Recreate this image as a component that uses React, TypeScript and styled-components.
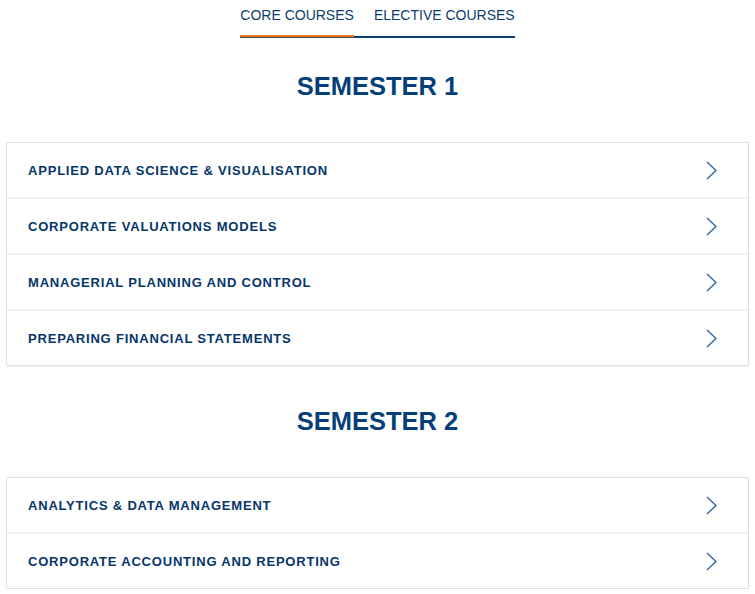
import React, { useState } from "react";
import styled, { createGlobalStyle } from "styled-components";

const GlobalStyle = createGlobalStyle`
  html, body { margin: 0; padding: 0; background: #ffffff; }
  body { font-family: "Liberation Sans", Arial, sans-serif; }
  * { box-sizing: border-box; }
`;

const Page = styled.div`
  padding: 0 6px;
  display: flex;
  flex-direction: column;
`;

const TabRow = styled.div`
  display: flex;
  justify-content: center;
`;

const TabBar = styled.div`
  display: inline-flex;
`;

const Tab = styled.button<{ $active?: boolean; $first?: boolean }>`
  border: none;
  background: none;
  margin: 0;
  cursor: pointer;
  font-family: "Liberation Sans", Arial, sans-serif;
  font-size: 14px;
  line-height: 16px;
  color: #0b3b6c;
  padding: 7px 0 15px ${(p) => (p.$first ? "0" : "20px")};
  box-shadow: ${(p) =>
    p.$active
      ? "inset 0 -1px 0 #4d4d4d, inset 0 -3px 0 #e4761b"
      : "inset 0 -2px 0 #063f78"};
`;

const Section = styled.section<{ $gap: number }>`
  margin-top: ${(p) => p.$gap}px;
  display: flex;
  flex-direction: column;
`;

const Heading = styled.h2`
  margin: 0 0 41px;
  text-align: center;
  font-family: "Liberation Sans", Arial, sans-serif;
  font-weight: 700;
  font-size: 25.5px;
  line-height: 30px;
  color: #063f78;
`;

const Card = styled.div`
  border: 1px solid #e0e0e0;
  border-radius: 2px;
  background: #fff;
  box-shadow: 0 1px 2px rgba(0, 0, 0, 0.06);
  display: flex;
  flex-direction: column;
`;

const Row = styled.div`
  box-sizing: content-box;
  height: 54px;
  display: flex;
  align-items: center;
  justify-content: space-between;
  padding: 0 31px 0 21px;
  & + & {
    border-top: 2px solid #f2f2f2;
  }
`;

const RowTitle = styled.span`
  font-family: "Liberation Sans", Arial, sans-serif;
  font-weight: 700;
  font-size: 13px;
  letter-spacing: 0.8px;
  color: #05366a;
`;

const Chevron = () => (
  <svg width="11" height="19" viewBox="0 0 11 19" fill="none">
    <path d="M1 1 L10 9.5 L1 18" stroke="#34669b" strokeWidth="1.4" />
  </svg>
);

const semesters = [
  {
    title: "SEMESTER 1",
    gap: 33,
    courses: [
      "APPLIED DATA SCIENCE & VISUALISATION",
      "CORPORATE VALUATIONS MODELS",
      "MANAGERIAL PLANNING AND CONTROL",
      "PREPARING FINANCIAL STATEMENTS",
    ],
  },
  {
    title: "SEMESTER 2",
    gap: 40,
    courses: ["ANALYTICS & DATA MANAGEMENT", "CORPORATE ACCOUNTING AND REPORTING"],
  },
];

export default function App() {
  const [tab, setTab] = useState(0);
  return (
    <>
      <GlobalStyle />
      <Page>
        <TabRow>
          <TabBar>
            <Tab $first $active={tab === 0} onClick={() => setTab(0)}>
              CORE COURSES
            </Tab>
            <Tab $active={tab === 1} onClick={() => setTab(1)}>
              ELECTIVE COURSES
            </Tab>
          </TabBar>
        </TabRow>
        {semesters.map((s) => (
          <Section key={s.title} $gap={s.gap}>
            <Heading>{s.title}</Heading>
            <Card>
              {s.courses.map((c) => (
                <Row key={c}>
                  <RowTitle>{c}</RowTitle>
                  <Chevron />
                </Row>
              ))}
            </Card>
          </Section>
        ))}
      </Page>
    </>
  );
}
